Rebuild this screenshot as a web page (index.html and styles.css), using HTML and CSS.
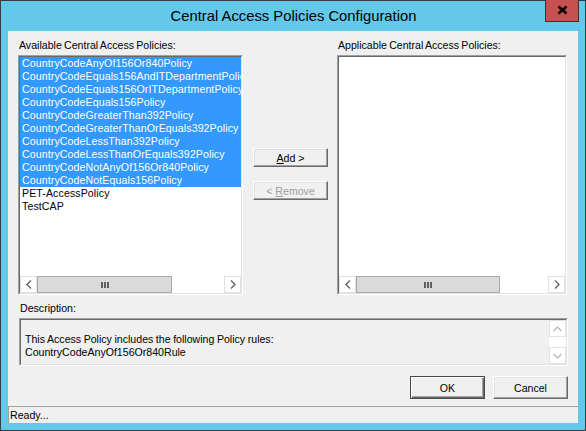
FILE: index.html
```html
<!DOCTYPE html>
<html>
<head>
<meta charset="utf-8">
<link rel="stylesheet" href="styles.css">
</head>
<body>
<div class="window">
  <div class="titlebar">
    <span class="title">Central Access Policies Configuration</span>
    <div class="close">
      <svg width="11" height="10" viewBox="0 0 11 10"><path d="M1.5 1.5 L9.5 8.5 M9.5 1.5 L1.5 8.5" stroke="#000" stroke-width="2.4" fill="none"/></svg>
    </div>
  </div>
  <div class="client">
    <div class="main">
      <div class="col col-left">
        <div class="label">Available Central Access Policies:</div>
        <div class="listbox">
          <div class="listbox-inner">
            <div class="items">
              <div class="item sel">CountryCodeAnyOf156Or840Policy</div>
              <div class="item sel">CountryCodeEquals156AndITDepartmentPolicy</div>
              <div class="item sel">CountryCodeEquals156OrITDepartmentPolicy</div>
              <div class="item sel">CountryCodeEquals156Policy</div>
              <div class="item sel">CountryCodeGreaterThan392Policy</div>
              <div class="item sel">CountryCodeGreaterThanOrEquals392Policy</div>
              <div class="item sel">CountryCodeLessThan392Policy</div>
              <div class="item sel">CountryCodeLessThanOrEquals392Policy</div>
              <div class="item sel">CountryCodeNotAnyOf156Or840Policy</div>
              <div class="item sel">CountryCodeNotEquals156Policy</div>
              <div class="item">PET-AccessPolicy</div>
              <div class="item">TestCAP</div>
            </div>
            <div class="hscroll">
              <div class="sb-btn"><svg width="6" height="9" viewBox="0 0 6 9"><path d="M5 0.5 L1 4.5 L5 8.5" stroke="#606060" stroke-width="1.3" fill="none"/></svg></div>
              <div class="thumb thumb-left"><span class="grip"><i></i><i></i><i></i></span></div>
              <div class="track"></div>
              <div class="sb-btn"><svg width="6" height="9" viewBox="0 0 6 9"><path d="M1 0.5 L5 4.5 L1 8.5" stroke="#606060" stroke-width="1.3" fill="none"/></svg></div>
            </div>
          </div>
        </div>
      </div>
      <div class="mid">
        <button class="btn btn-small"><span><u>A</u>dd &gt;</span></button>
        <button class="btn btn-small disabled"><span>&lt; <u>R</u>emove</span></button>
      </div>
      <div class="col col-right">
        <div class="label">Applicable Central Access Policies:</div>
        <div class="listbox">
          <div class="listbox-inner">
            <div class="items"></div>
            <div class="hscroll">
              <div class="sb-btn"><svg width="6" height="9" viewBox="0 0 6 9"><path d="M5 0.5 L1 4.5 L5 8.5" stroke="#606060" stroke-width="1.3" fill="none"/></svg></div>
              <div class="thumb thumb-right"><span class="grip"><i></i><i></i><i></i></span></div>
              <div class="track"></div>
              <div class="sb-btn"><svg width="6" height="9" viewBox="0 0 6 9"><path d="M1 0.5 L5 4.5 L1 8.5" stroke="#606060" stroke-width="1.3" fill="none"/></svg></div>
            </div>
          </div>
        </div>
      </div>
    </div>
    <div class="desc-section">
      <div class="label">Description:</div>
      <div class="descbox">
        <div class="descbox-inner">
          <div class="desc-text"><div class="line">&nbsp;</div><div class="line">This Access Policy includes the following Policy rules:</div><div class="line">CountryCodeAnyOf156Or840Rule</div></div>
          <div class="vscroll">
            <div class="vs-btn"><svg width="9" height="6" viewBox="0 0 9 6"><path d="M0.5 5 L4.5 1 L8.5 5" stroke="#b4b4b4" stroke-width="1.2" fill="none"/></svg></div>
            <div class="vs-track"></div>
            <div class="vs-btn"><svg width="9" height="6" viewBox="0 0 9 6"><path d="M0.5 1 L4.5 5 L8.5 1" stroke="#b4b4b4" stroke-width="1.2" fill="none"/></svg></div>
          </div>
        </div>
      </div>
    </div>
    <div class="actions">
      <button class="btn btn-big default"><span>OK</span></button>
      <button class="btn btn-big"><span>Cancel</span></button>
    </div>
    <div class="status">Ready...</div>
  </div>
</div>
</body>
</html>
```

FILE: styles.css
```css
* { box-sizing: border-box; }
html, body { margin: 0; padding: 0; background: #ffffff; }
body {
  font-family: "Liberation Sans", Arial, sans-serif;
  font-size: 10.6px;
  color: #000;
}
.window {
  position: relative;
  width: 586px;
  height: 431px;
  border: 1px solid #3c3c3c;
  background: #63c8ea;
  padding: 0 7px 7px 7px;
  display: flex;
  flex-direction: column;
}
.titlebar {
  height: 30px;
  display: flex;
  justify-content: center;
  align-items: flex-start;
}
.title {
  font-size: 14.8px;
  line-height: 30px;
  color: #000;
  padding-left: 1px;
}
.close {
  position: absolute;
  top: -1px;
  right: 6px;
  width: 34px;
  height: 22px;
  background: #c75050;
  border: 1px solid #4a2a2a;
  border-top: none;
  display: flex;
  align-items: center;
  justify-content: center;
  padding-bottom: 1px;
}
.client {
  flex: 1;
  background: #f0f0f0;
  display: flex;
  flex-direction: column;
}
.main {
  display: flex;
  padding: 5px 11px 0 10px;
}
.col { display: flex; flex-direction: column; }
.col-left { width: 225px; }
.col-right { width: 230px; }
.label {
  height: 19px;
  line-height: 19px;
  padding-left: 1px;
  word-spacing: -0.7px;
  white-space: nowrap;
}
.listbox {
  height: 240px;
  border: 1px solid;
  border-color: #a0a0a0 #ffffff #ffffff #a0a0a0;
}
.listbox-inner {
  height: 100%;
  border: 1px solid;
  border-color: #696969 #e3e3e3 #e3e3e3 #696969;
  background: #fff;
  display: flex;
  flex-direction: column;
}
.items {
  flex: 1;
  overflow: hidden;
}
.item {
  height: 13px;
  line-height: 13px;
  padding-left: 2px;
  white-space: nowrap;
  overflow: hidden;
  letter-spacing: 0.1px;
}
.item.sel {
  background: #3399ff;
  color: #fff;
}
.hscroll {
  height: 17px;
  display: flex;
  background: #fff;
}
.sb-btn {
  width: 17px;
  flex: none;
  border: 1px solid #e2e2e2;
  background: #fff;
  display: flex;
  align-items: center;
  justify-content: center;
}
.thumb {
  flex: none;
  background: #dadada;
  border: 1px solid #a8a8a8;
  display: flex;
  align-items: center;
  justify-content: center;
}
.thumb-left { width: 135px; }
.thumb-right { width: 144px; }
.track { flex: 1; background: #fff; }
.grip { display: flex; gap: 1px; }
.grip i {
  display: block;
  width: 2px;
  height: 6px;
  background: #606060;
}
.mid {
  width: 75px;
  margin: 0 9px 0 10px;
  padding-top: 112px;
  display: flex;
  flex-direction: column;
  gap: 14px;
}
.btn {
  font: inherit;
  color: #000;
  background: #f0f0f0;
  padding: 0;
  margin: 0;
  width: 75px;
  border: 1px solid;
  border-color: #ffffff #696969 #696969 #ffffff;
  box-shadow: inset -1px -1px #a0a0a0, inset 1px 1px #e3e3e3;
  display: flex;
  align-items: center;
  justify-content: center;
  white-space: pre;
}
.btn u { text-decoration: underline; }
.btn-small { height: 19px; }
.btn-big { height: 23px; }
.btn.disabled { color: #a0a0a0; }
.btn.default {
  border: 1px solid #4a4a4a;
  box-shadow: inset 1px 1px #ffffff, inset -1px -1px #696969, inset -2px -2px #a0a0a0;
}
.desc-section {
  margin-top: 4px;
  padding: 0 10px 0 11px;
}
.descbox {
  height: 48px;
  border: 1px solid;
  border-color: #a0a0a0 #ffffff #ffffff #a0a0a0;
}
.descbox-inner {
  height: 100%;
  border: 1px solid;
  border-color: #696969 #e3e3e3 #e3e3e3 #696969;
  display: flex;
}
.desc-text {
  flex: 1;
  padding-left: 4px;
  word-spacing: -0.4px;
}
.line { height: 13px; line-height: 13px; white-space: nowrap; }
.vscroll {
  width: 17px;
  display: flex;
  flex-direction: column;
  background: #fff;
}
.vs-btn {
  height: 17px;
  border: 1px solid #e2e2e2;
  display: flex;
  align-items: center;
  justify-content: center;
}
.vs-track { flex: 1; }
.actions {
  margin-top: 10px;
  padding-right: 10px;
  display: flex;
  justify-content: flex-end;
  gap: 8px;
}
.status {
  margin-top: 7px;
  height: 17px;
  border-top: 1px solid #a0a0a0;
  border-left: 1px solid #a0a0a0;
  padding-left: 1px;
  line-height: 16px;
}
```
